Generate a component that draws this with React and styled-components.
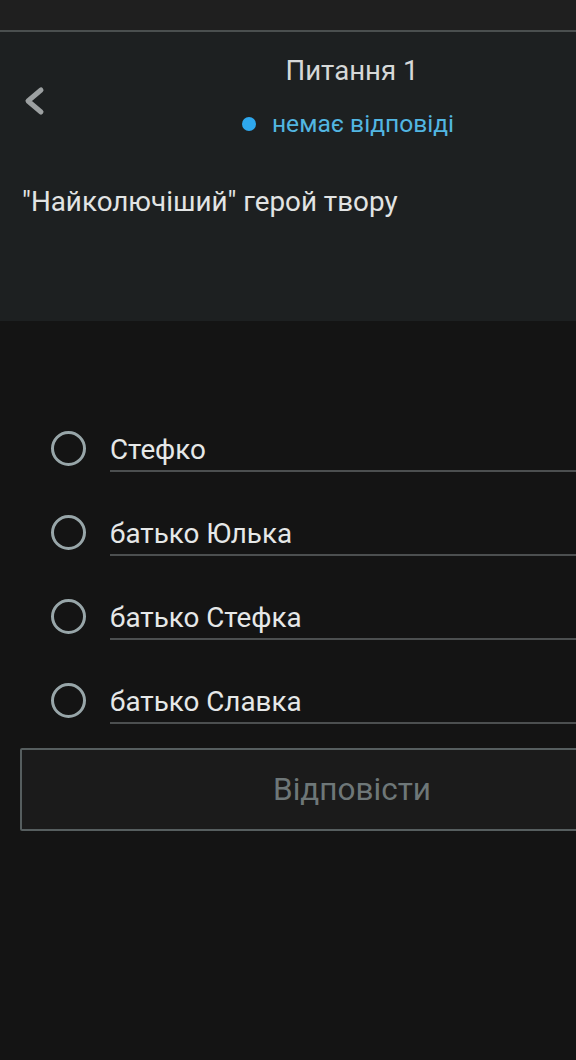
import React from 'react'
import styled, { createGlobalStyle } from 'styled-components'

const GlobalStyle = createGlobalStyle`
  html, body {
    margin: 0;
    padding: 0;
    background: #141414;
    overflow: hidden;
    font-family: Roboto, "Noto Sans", sans-serif;
  }
`

const Viewport = styled.div`
  width: 576px;
  min-height: 1060px;
  overflow: hidden;
  background: #141414;
`

const Page = styled.div`
  width: 704px;
`

const TopBar = styled.div`
  height: 30px;
  background: #1f1f1f;
  border-bottom: 2px solid #4a4f4f;
`

const Header = styled.header`
  height: 289px;
  background: #1d2021;
  box-sizing: border-box;
  padding-top: 23px;
`

const HeadRow = styled.div`
  position: relative;
  display: flex;
  flex-direction: column;
  align-items: center;
`

const BackButton = styled.button`
  position: absolute;
  left: 20px;
  top: 30px;
  width: 28px;
  height: 32px;
  padding: 0;
  border: none;
  background: none;
  display: flex;
  align-items: center;
  justify-content: center;
`

const Title = styled.h1`
  margin: 0;
  font-size: 27.6px;
  font-weight: 400;
  line-height: 32px;
  color: #d6d8d8;
`

const Status = styled.div`
  margin-top: 22px;
  display: flex;
  align-items: center;
  gap: 16px;
  font-size: 24.6px;
  line-height: 30px;
  color: #52b6e2;
  margin-left: -8px;
`

const Dot = styled.span`
  width: 14px;
  height: 14px;
  border-radius: 50%;
  background: #2ea8ee;
`

const Question = styled.p`
  margin: 46px 0 0 22px;
  font-size: 27.8px;
  line-height: 34px;
  color: #e2e4e4;
`

const Options = styled.ul`
  list-style: none;
  margin: 0;
  padding: 100px 0 0 51px;
  display: flex;
  flex-direction: column;
`

const Option = styled.li`
  height: 84px;
  display: flex;
  align-items: flex-start;
  gap: 24px;
`

const Radio = styled.span`
  flex: none;
  width: 29px;
  height: 29px;
  margin-top: 10px;
  border: 3px solid #98a6a9;
  border-radius: 50%;
`

const Label = styled.div`
  flex: 1;
  height: 51px;
  box-sizing: border-box;
  padding-top: 12px;
  border-bottom: 2px solid #4c4f50;
  font-size: 27.8px;
  line-height: 34px;
  color: #e6e8e8;
`

const Submit = styled.button`
  display: block;
  margin: -9px 20px 0;
  width: 664px;
  height: 83px;
  background: #1b1b1b;
  border: 2px solid #565e5f;
  border-radius: 2px;
  font-family: Roboto, "Noto Sans", sans-serif;
  font-size: 31.5px;
  color: #6e7778;
`

const answers = ['Стефко', 'батько Юлька', 'батько Стефка', 'батько Славка']

export default function App () {
  return (
    <Viewport>
      <GlobalStyle />
      <Page>
        <TopBar />
        <Header>
          <HeadRow>
            <BackButton aria-label='назад'>
              <svg width='24' height='30' viewBox='0 0 24 30'>
                <path d='M19 4 L6 15 L19 26' fill='none' stroke='#9ca0a1' strokeWidth='5' strokeLinecap='round' strokeLinejoin='round' />
              </svg>
            </BackButton>
            <Title>Питання 1</Title>
            <Status><Dot />немає відповіді</Status>
          </HeadRow>
          <Question>"Найколючіший" герой твору</Question>
        </Header>
        <Options>
          {answers.map(a => (
            <Option key={a}>
              <Radio />
              <Label>{a}</Label>
            </Option>
          ))}
        </Options>
        <Submit>Відповісти</Submit>
      </Page>
    </Viewport>
  )
}
